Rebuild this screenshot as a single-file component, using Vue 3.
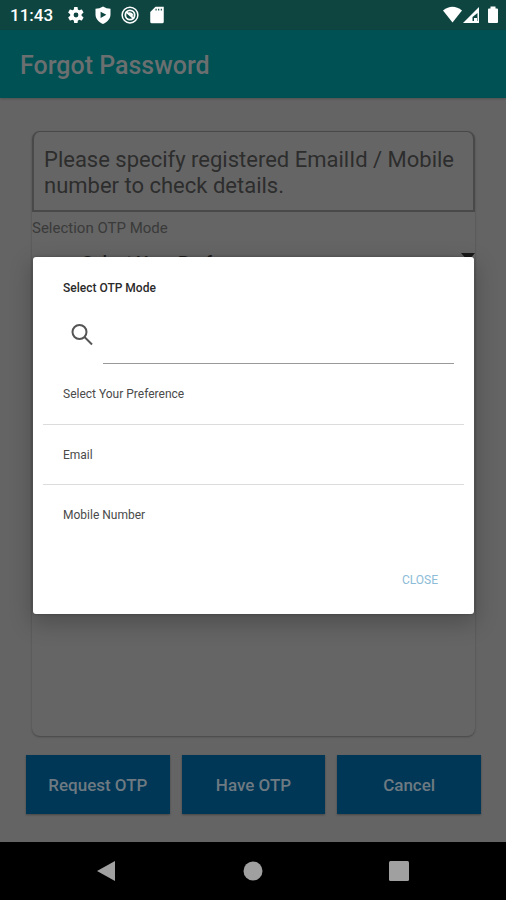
<script setup>
import { ref } from 'vue'

const modes = ['Select Your Preference', 'Email', 'Mobile Number']
const actions = ['Request OTP', 'Have OTP', 'Cancel']
const query = ref('')
const open = ref(true)
const selected = ref(modes[0])

function choose(mode) {
  selected.value = mode
  open.value = false
}
</script>

<template>
  <div class="screen">
    <div class="status">
      <span class="clock">11:43</span>
      <svg class="glyph" viewBox="0 0 24 24"><path fill-rule="evenodd" d="M19.4 13c.1-.3.1-.7.1-1s0-.7-.1-1l2.400-1.900c.2-.2.3-.5.1-.7l-2.100-3.600c-.1-.2-.4-.3-.7-.2l-2.700 1.100c-.6-.4-1.200-.8-1.900-1.100L14.100 1.800c0-.2-.3-.4-.5-.4h-3.600c-.3 0-.5.2-.5.4l-.4 2.800c-.7.3-1.300.7-1.900 1.100L4.500 4.600c-.3-.1-.6 0-.7.2L1.700 8.400c-.1.200-.1.500.1.700L4.300 11c-.1.300-.1.700-.1 1s0 .7.1 1l-2.500 1.900c-.2.200-.2.500-.1.700l2.100 3.600c.1.200.4.300.7.200l2.700-1.100c.6.400 1.200.8 1.900 1.100l.4 2.800c0 .2.200.4.500.4h3.600c.2 0 .5-.2.500-.4l.4-2.800c.7-.3 1.300-.7 1.900-1.100l2.700 1.100c.3.100.6 0 .7-.2l2.100-3.600c.2-.2.100-.5-.1-.7zM12 15.200a3.200 3.200 0 1 1 0-6.400 3.200 3.200 0 0 1 0 6.400z" /></svg>
      <svg class="glyph" viewBox="0 0 24 24"><path fill-rule="evenodd" d="M12 .5Q7.500 3.500 2 3.500V11c0 6 4 10.500 10 13 6-2.500 10-7 10-13V3.500Q16.500 3.500 12 .5zM8.800 7.500v8.600L16.500 11.800z" /></svg>
      <svg class="glyph" viewBox="0 0 24 24"><g fill="none" stroke="#fff"><circle cx="12" cy="12" r="10.500" stroke-width="2" /><circle cx="12" cy="12" r="6.200" stroke-width="2.400" /><path d="M6.500 7.500l11 9.500M10 9.500q4.500-.5 5.500 3.500" stroke-width="2.400" /></g></svg>
      <svg class="glyph" viewBox="0 0 24 24"><path fill-rule="evenodd" d="M21 1H10L3 8v13a2 2 0 0 0 2 2h14a2 2 0 0 0 2-2zM10 3.500h1.500v2.500H10zm3.500 0H15v2.500h-1.500zm3.500 0h1.500v2.500H17z" /></svg>
      <svg class="signals" viewBox="0 0 56 20"><path d="M0 5.500Q9.500-2 19 5.500L9.500 17.500z" /><path fill-rule="evenodd" d="M20 18L36 2v16zM29.500 12v4h5V8z" /><path d="M31 13h3v4h-3z" /><path d="M47.500 1.500h5v2h1.500q1 0 1 1V17q0 1-1 1h-8q-1 0-1-1V4.500q0-1 1-1h1.500z" /></svg>
    </div>

    <header class="bar"><h1>Forgot Password</h1></header>

    <main class="body">
      <section class="card">
        <p class="notice">Please specify registered EmailId / Mobile number to check details.</p>
        <span class="label">Selection OTP Mode</span>
        <button class="spinner" type="button" aria-label="Selection OTP Mode" @click="open = true">
          <span>{{ selected }}</span>
          <svg class="caret" viewBox="0 0 14 8"><path d="M0 0h14L7 8z" /></svg>
        </button>
      </section>

      <div class="actions">
        <button v-for="action in actions" :key="action" type="button" class="action">{{ action }}</button>
      </div>

      <div v-if="open" class="overlay">
        <div class="dialog" role="dialog" aria-labelledby="dialog-title">
          <h2 id="dialog-title">Select OTP Mode</h2>
          <label class="search">
            <svg class="lens" viewBox="0 0 24 24"><circle cx="9.500" cy="9" r="7" /><path d="M14.500 14L22 21.500" /></svg>
            <input v-model="query" type="text" aria-label="Search">
          </label>
          <ul class="modes">
            <li v-for="mode in modes" :key="mode">
              <button type="button" @click="choose(mode)">{{ mode }}</button>
            </li>
          </ul>
          <button type="button" class="close" @click="open = false">CLOSE</button>
        </div>
      </div>
    </main>

    <nav class="nav">
      <button type="button" aria-label="Back"><svg viewBox="0 0 22 22"><path d="M1 11L19 1v20z" /></svg></button>
      <button type="button" aria-label="Home"><svg viewBox="0 0 22 22"><circle cx="11" cy="11" r="9.500" /></svg></button>
      <button type="button" aria-label="Recent apps"><svg viewBox="0 0 22 22"><rect x="1" y="1" width="20" height="20" rx="1.500" /></svg></button>
    </nav>
  </div>
</template>

<style>
body {
  margin: 0;
}
</style>

<style scoped>
.screen {
  display: flex;
  flex-direction: column;
  min-height: 100vh;
  background: #646464;
  font-family: Roboto, sans-serif;
}

button {
  font-family: inherit;
  border: 0;
  padding: 0;
  background: none;
  cursor: pointer;
}

.status {
  display: flex;
  align-items: center;
  gap: 9px;
  height: 30px;
  padding: 0 7px 0 10px;
  box-sizing: border-box;
  background: #0e4540;
  color: #fff;
}

.clock {
  margin-right: 5px;
  font-size: 17px;
  font-weight: 500;
  line-height: 30px;
}

.glyph {
  width: 18px;
  height: 18px;
  fill: #fff;
}

.signals {
  width: 56px;
  height: 20px;
  margin-left: auto;
  fill: #fff;
}

.bar {
  display: flex;
  align-items: center;
  height: 68px;
  padding: 0 20px;
  background: #005154;
  box-shadow: 0 1px 2px rgba(0, 0, 0, 0.2);
}

h1 {
  margin: 0;
  padding-top: 4px;
  font-size: 25px;
  font-weight: 500;
  line-height: 30px;
  color: #6b6f70;
}

.body {
  position: relative;
  flex: 1;
  display: flex;
  flex-direction: column;
  padding: 33px 25px 28px 26px;
}

.card {
  flex: 1;
  margin: 0 6px;
  border-radius: 8px;
  background: #656565;
  box-shadow: 0 1px 2px rgba(0, 0, 0, 0.3);
}

.notice {
  margin: 0;
  padding: 15px 10px 11px;
  border: 2px solid #494949;
  border-top-width: 1px;
  border-radius: 8px 8px 0 0;
  font-size: 22px;
  line-height: 26px;
  color: #2d2d2d;
}

.label {
  display: block;
  padding-top: 7px;
  font-size: 15px;
  line-height: 18px;
  color: #3a3a3a;
}

.spinner {
  display: flex;
  justify-content: space-between;
  width: 100%;
  margin-top: 14px;
  padding-left: 50px;
  font-size: 18px;
  font-weight: 500;
  line-height: 24px;
  color: #202020;
}

.caret {
  width: 14px;
  height: 8px;
  margin-top: 2px;
  fill: #181818;
}

.actions {
  display: grid;
  grid-template-columns: repeat(3, 1fr);
  gap: 12px;
  margin-top: 19px;
}

.action {
  height: 59px;
  background: #003756;
  box-shadow: 0 1px 2px rgba(0, 0, 0, 0.3);
  font-size: 17px;
  font-weight: 500;
  color: #6e7a82;
}

.overlay {
  position: absolute;
  inset: -68px 0 1px;
  display: flex;
  align-items: center;
  padding: 0 32px 0 33px;
}

.dialog {
  flex: 1;
  display: flex;
  flex-direction: column;
  box-sizing: border-box;
  padding: 22px 10px 16px;
  border-radius: 3px;
  background: #fff;
  box-shadow: 0 8px 22px 2px rgba(0, 0, 0, 0.22), 0 0 3px rgba(0, 0, 0, 0.3);
}

h2 {
  margin: 0;
  padding-left: 20px;
  font-size: 12px;
  font-weight: 500;
  line-height: 18px;
  color: #2a2a2a;
}

.search {
  display: flex;
  margin: 19px 10px 0 27px;
}

.lens {
  width: 24px;
  height: 24px;
  margin: 7px 9px 0 0;
  fill: none;
  stroke: #555;
  stroke-width: 2;
}

.search input {
  flex: 1;
  min-width: 0;
  height: 48px;
  box-sizing: border-box;
  padding: 0 4px;
  border: 0;
  border-bottom: 1px solid #999;
  outline: 0;
  background: none;
  font: 16px Roboto, sans-serif;
}

.modes {
  margin: 0;
  padding: 0;
  list-style: none;
}

.modes li {
  height: 60px;
  box-sizing: border-box;
}

.modes li + li {
  border-top: 1px solid #dcdcdc;
}

.modes button {
  width: 100%;
  height: 100%;
  padding: 0 20px;
  text-align: left;
  font-size: 12px;
  color: #4a4a4a;
}

.close {
  align-self: flex-end;
  width: 56px;
  height: 36px;
  margin: 18px 16px 0 0;
  font-size: 12px;
  color: #8cbcd8;
}

.nav {
  display: flex;
  justify-content: center;
  align-items: center;
  gap: 124px;
  height: 58px;
  background: #000;
}

.nav svg {
  display: block;
  width: 22px;
  height: 22px;
  fill: #a0a0a0;
}
</style>
